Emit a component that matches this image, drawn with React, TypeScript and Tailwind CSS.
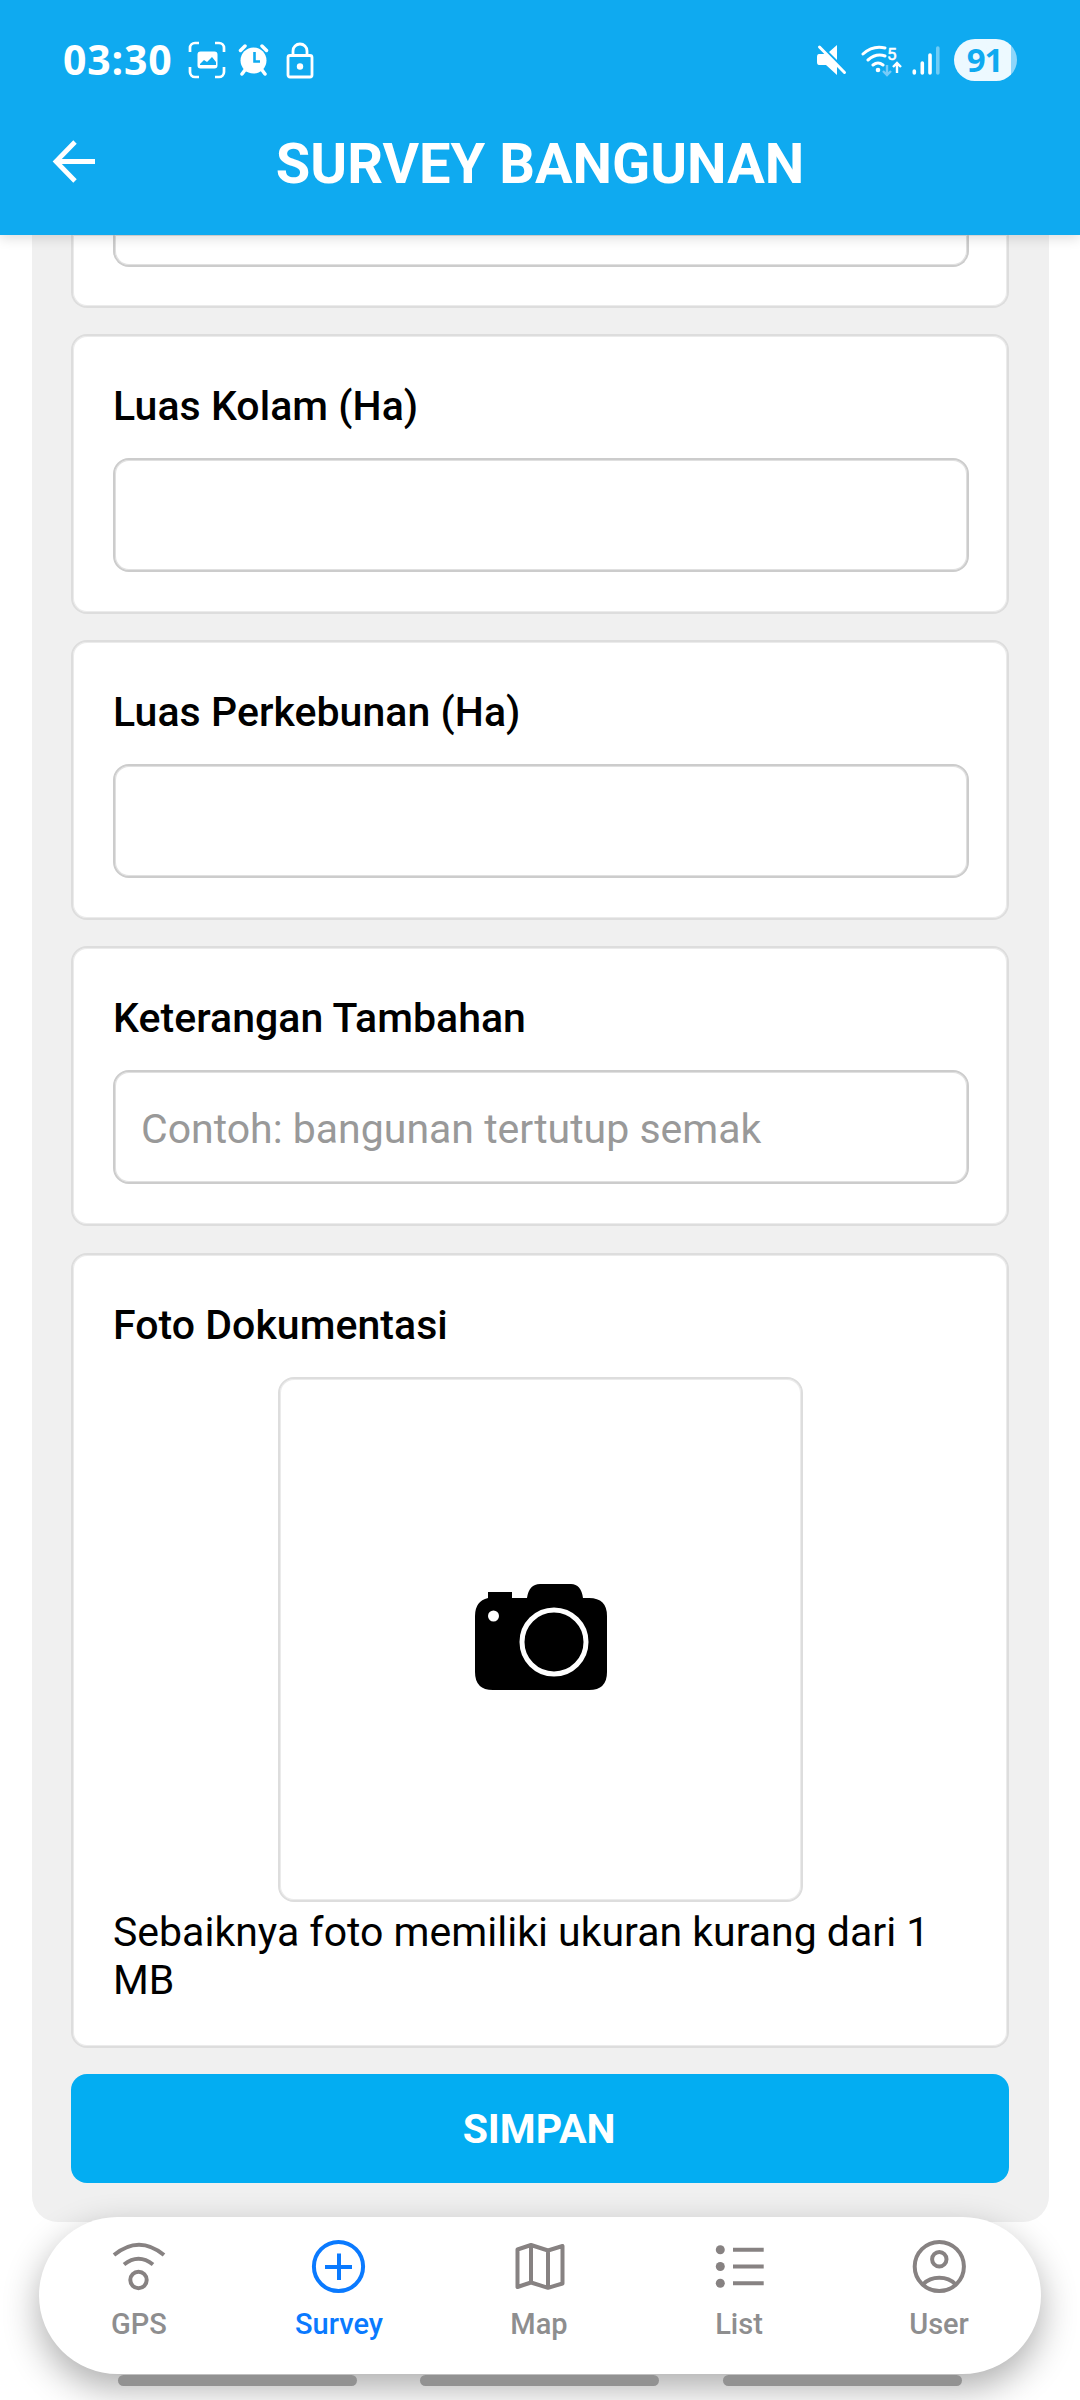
import React from "react";

function Field({ label, placeholder }: { label: string; placeholder?: string }) {
  return (
    <section className="h-[280px] shrink-0 rounded-[16px] border-2 border-[#dddddd] bg-white pt-[46px] pr-[38px] pl-[40px] shadow-[inset_0_0_0_1px_#ebebeb]">
      <h2 className="h-[49px] text-[41px] leading-[49px] font-medium tracking-[0.05px] whitespace-nowrap text-black">{label}</h2>
      <div className="mt-[27px] flex h-[114px] items-center rounded-[16px] border-2 border-[#cccccc] px-[26px] pt-[5px] text-[41px] text-[#999999] shadow-[inset_0_0_0_1px_#e0e0e0]">
        {placeholder}
      </div>
    </section>
  );
}

function StatusBar() {
  return (
    <div className="flex h-[120px] items-center justify-between pr-[63px] pl-[63px]">
      <div className="flex items-center text-white">
        <span className="w-[109px] font-['Open_Sans'] text-[41px] font-bold tracking-[0.8px]">03:30</span>
        <svg className="ml-[16px]" width="38" height="38" viewBox="0 0 38 38" fill="none" stroke="white" strokeWidth="2.7">
          <path d="M2 11V7a5 5 0 0 1 5-5h4M27 2h4a5 5 0 0 1 5 5v4M36 26v5a5 5 0 0 1-5 5h-4M11 36H7a5 5 0 0 1-5-5v-5" />
          <path d="M12.500 10.500h14a3 3 0 0 1 3 3v11a3 3 0 0 1-3 3h-14a3 3 0 0 1-3-3v-11a3 3 0 0 1 3-3z" fill="white" stroke="none" />
          <path d="M12 23l4-4 3 2 5-5 4 5v3H12z" fill="#0faaf0" stroke="none" />
        </svg>
        <svg className="ml-[11px]" width="36" height="36" viewBox="0 0 36 36">
          <circle cx="16.500" cy="18.500" r="13" fill="white" />
          <path d="M3.500 8.500l4.500-4.500M29.500 8.500l-4.500-4.500M8 28l-3 4M25 28l3 4" stroke="white" strokeWidth="3.500" strokeLinecap="round" />
          <path d="M17.500 10v9.500h5.500" fill="none" stroke="#0faaf0" strokeWidth="2.600" />
        </svg>
        <svg className="ml-[12px]" width="30" height="38" viewBox="0 0 30 38" fill="none" stroke="white" strokeWidth="2.800">
          <rect x="3" y="14.500" width="24" height="21.500" rx="2" />
          <path d="M8 14V10a7 7 0 0 1 14 0v4" />
          <circle cx="15" cy="25.500" r="3.200" fill="white" stroke="none" />
        </svg>
      </div>
      <div className="flex items-center">
        <svg width="32" height="34" viewBox="0 0 32 34">
          <path d="M3 11h6L21 22v10L10 22H3Q1 22 1 19v-5Q1 11 3 11zM21 2v15L13 9z" fill="white" />
          <path d="M3.500 4L28.500 29.500" stroke="white" strokeWidth="3" strokeLinecap="round" />
        </svg>
        <svg className="ml-[13px]" width="42" height="34" viewBox="0 0 42 34" fill="none" stroke="white" strokeWidth="3">
          <path d="M2 11Q12 2 24 5M7 17Q15 10 24 13M12 22Q17 18 22 22" strokeLinecap="round" />
          <circle cx="17" cy="27" r="2.300" fill="white" stroke="none" />
          <text x="26" y="17" fill="white" stroke="white" strokeWidth=".5" fontFamily="Roboto" fontSize="17">5</text>
          <path d="M26 22v9M22 28l4 4 4-4" stroke="#77cbf8" strokeWidth="2.400" />
          <path d="M36 30V20M32 24l4-4 4 4" strokeWidth="2.400" />
        </svg>
        <svg className="ml-[8px]" width="30" height="34" viewBox="0 0 30 34" stroke="white" strokeWidth="3.600" strokeLinecap="round">
          <path d="M3.300 28v2M11.300 20v10M19 12v18" />
          <path d="M26.800 5v25" opacity=".4" />
        </svg>
        <div className="ml-[13px] flex h-[42px] w-[63px] items-center justify-center rounded-full bg-linear-to-r from-[#edf9ff] from-90% to-[#8fd6fa] to-90% pr-[2px] font-['Open_Sans'] text-[33px] font-bold tracking-[-1px] text-[#0faaf0]">
          91
        </div>
      </div>
    </div>
  );
}

const ink = "#878282";
const tabs = [
  {
    name: "GPS",
    icon: (
      <g stroke={ink}>
        <path d="M3 18Q28 -2.500 53 18" />
        <path d="M13 27.500Q27.500 16 42 27.500" />
        <circle cx="27.500" cy="43" r="8.200" />
      </g>
    ),
  },
  {
    name: "Survey",
    icon: (
      <g stroke="#0a7aff">
        <circle cx="27.500" cy="29.500" r="24.600" />
        <path d="M28 16.500v26.500M14 30h27" />
      </g>
    ),
  },
  {
    name: "Map",
    icon: (
      <g stroke={ink} strokeLinejoin="round">
        <path d="M6.500 12.500L20 8l17 5.500 14.500-4.500v37.500l-14.500 4.300-17-5.300-13.500 4.500zM20 8v37.500M37 13.500v37" />
      </g>
    ),
  },
  {
    name: "List",
    icon: (
      <g stroke={ink}>
        <path d="M22 12.700h30.700M22 29.500h30.700M22 46.200h30.700" />
        <g fill={ink} stroke="none">
          <circle cx="9.300" cy="12.800" r="4.500" />
          <circle cx="9.300" cy="29.500" r="4.500" />
          <circle cx="9.300" cy="46.200" r="4.500" />
        </g>
      </g>
    ),
  },
  {
    name: "User",
    icon: (
      <g stroke={ink}>
        <circle cx="28.300" cy="29.500" r="24.600" />
        <circle cx="28.300" cy="22.300" r="7.200" />
        <path d="M12.300 47C20.300 38.500 36.300 38.500 44.300 47" />
      </g>
    ),
  },
];

export default function App() {
  return (
    <div className="relative flex h-[2400px] w-[1080px] flex-col overflow-hidden bg-white font-['Roboto',sans-serif]">
      <header className="relative z-10 h-[235px] shrink-0 bg-[#0faaf0] shadow-[0_3px_12px_rgba(0,0,0,0.14)]">
        <StatusBar />
        <div className="grid h-[84px] grid-cols-[160px_1fr_160px] items-center">
          <svg className="ml-[52px]" width="44" height="44" viewBox="0 0 44 44" fill="none" stroke="white" strokeWidth="4.800">
            <path d="M23 2L4 21.500 23 41M4 21.500h39" />
          </svg>
          <h1 className="pt-[4px] text-center text-[56px] leading-[66px] font-bold whitespace-nowrap text-white">SURVEY BANGUNAN</h1>
        </div>
      </header>

      <main className="ml-[32px] flex h-[1987px] w-[1017px] shrink-0 flex-col gap-[26px] rounded-b-[26px] bg-[#f0f0f0] pr-[40px] pl-[39px]">
        <section className="h-[73px] shrink-0 rounded-b-[16px] border-x-2 border-b-2 border-[#dddddd] bg-white pr-[38px] pl-[40px] shadow-[inset_0_0_0_1px_#ebebeb]">
          <div className="h-[32px] rounded-b-[16px] border-x-2 border-b-2 border-[#cccccc] shadow-[inset_0_0_0_1px_#e0e0e0]" />
        </section>
        <Field label="Luas Kolam (Ha)" />
        <Field label="Luas Perkebunan (Ha)" />
        <Field label="Keterangan Tambahan" placeholder="Contoh: bangunan tertutup semak" />
        <section className="mt-px flex h-[795px] shrink-0 flex-col rounded-[16px] border-2 border-[#dddddd] bg-white px-[40px] pt-[46px] shadow-[inset_0_0_0_1px_#ebebeb]">
          <h2 className="text-[41px] leading-[49px] font-medium tracking-[0.05px]">Foto Dokumentasi</h2>
          <div className="mt-[27px] ml-px flex h-[525px] w-[525px] items-center justify-center self-center rounded-[16px] border-2 border-[#dddddd] shadow-[inset_0_0_0_1px_#ebebeb]">
            <svg className="mt-[-5px]" width="132" height="106" viewBox="0 0 132 106">
              <path d="M13 14V8h24v6h15Q54 0 65 0h31q10 0 12 14h6q18 0 18 18v56q0 18-18 18H18Q0 106 0 88V32Q0 17 13 14z" />
              <circle cx="79" cy="58" r="32" fill="none" stroke="white" strokeWidth="5" />
              <circle cx="18.500" cy="32" r="5.500" fill="white" />
            </svg>
          </div>
          <p className="mt-[6px] text-[41px] leading-[48px] text-black">Sebaiknya foto memiliki ukuran kurang dari 1 MB</p>
        </section>
        <button className="h-[109px] shrink-0 rounded-[16px] bg-[#03adf2] pt-[3px] pr-[2px] text-[41px] font-bold text-white">SIMPAN</button>
      </main>

      <nav className="absolute top-[2217px] left-[39px] grid h-[157px] w-[1002px] grid-cols-5 rounded-full bg-white pr-[2px] shadow-[0_14px_36px_rgba(0,0,0,0.32)]">
        {tabs.map((tab) => (
          <div key={tab.name} className="flex flex-col items-center pt-[20px]">
            <svg width="56" height="60" viewBox="0 0 56 60" fill="none" strokeWidth="4">
              {tab.icon}
            </svg>
            <span className={tab.name === "Survey" ? "mt-[10px] text-[29px] leading-[34px] font-medium text-[#0a7aff]" : "mt-[10px] text-[29px] leading-[34px] font-medium text-[#8e8e8f]"}>
              {tab.name}
            </span>
          </div>
        ))}
      </nav>
      <div className="absolute top-[2375px] left-[118px] flex w-[844px] gap-[63px]">
        <div className="h-[11px] w-[239px] rounded-full bg-[#929292]" />
        <div className="h-[11px] w-[239px] rounded-full bg-[#929292]" />
        <div className="ml-px h-[11px] w-[239px] rounded-full bg-[#929292]" />
      </div>
    </div>
  );
}
